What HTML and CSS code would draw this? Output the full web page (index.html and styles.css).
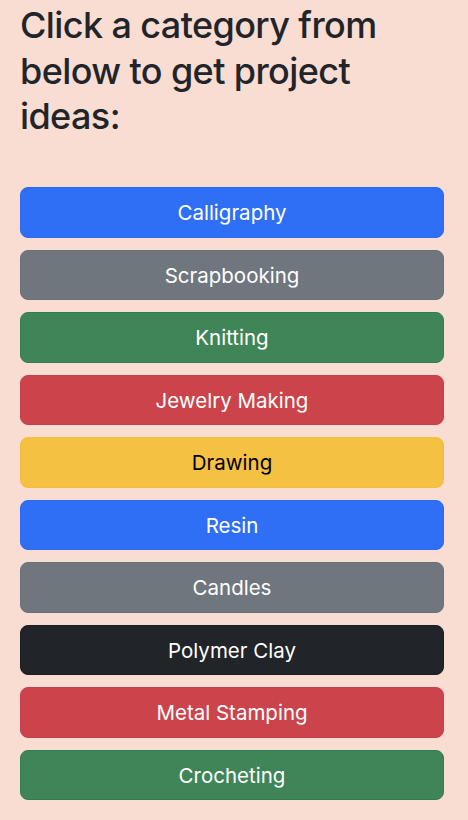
FILE: index.html
```html
<!DOCTYPE html>
<html>
<head>
<meta charset="utf-8">
<link rel="stylesheet" href="styles.css">
</head>
<body>
<main class="page">
  <h1 class="title">Click a category from below to get project ideas:</h1>
  <div class="list">
    <button class="btn blue">Calligraphy</button>
    <button class="btn grey">Scrapbooking</button>
    <button class="btn green">Knitting</button>
    <button class="btn red">Jewelry Making</button>
    <button class="btn yellow">Drawing</button>
    <button class="btn blue">Resin</button>
    <button class="btn grey">Candles</button>
    <button class="btn dark">Polymer Clay</button>
    <button class="btn red">Metal Stamping</button>
    <button class="btn green">Crocheting</button>
  </div>
</main>
</body>
</html>
```
FILE: styles.css
```css
html, body {
  margin: 0;
  padding: 0;
  background: #f9ddd3;
  font-family: Inter, "Noto Sans", sans-serif;
  color: #212529;
}
.page {
  padding: 0 24px 0 20px;
}
.title {
  margin: 0;
  padding-top: 3px;
  font-size: 36px;
  font-weight: 500;
  line-height: 45.5px;
  letter-spacing: -0.6px;
  width: 400px;
}
.list {
  display: flex;
  flex-direction: column;
  gap: 12px;
  margin-top: 47.5px;
}
.btn {
  display: block;
  width: 100%;
  box-sizing: border-box;
  height: 50.5px;
  padding: 2px 16px 0;
  border: 1px solid transparent;
  border-radius: 8px;
  font-family: Inter, "Noto Sans", sans-serif;
  font-size: 20.5px;
  font-weight: 400;
  line-height: 30px;
  color: #fff;
  text-align: center;
}
.blue { background: #2f6ff5; border-color: #2a6bf2; }
.grey { background: #6f767e; border-color: #6a7178; }
.green { background: #3f8558; border-color: #2f8050; }
.red { background: #cc444b; border-color: #c93f47; }
.yellow { background: #f5c142; border-color: #f3be3d; color: #000; }
.dark { background: #212428; border-color: #1c1f22; }
```
